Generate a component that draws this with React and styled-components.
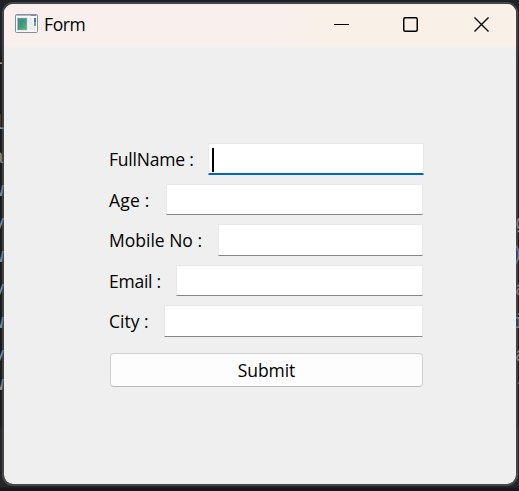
import React from "react";
import styled, { createGlobalStyle } from "styled-components";

const GlobalStyle = createGlobalStyle`
  * { box-sizing: border-box; }
  body { margin: 0; overflow: hidden; }
`;

const Desktop = styled.main`
  position: relative;
  width: 519px;
  height: 491px;
  padding: 2px 1px 5px 2px;
  overflow: hidden;
  background: linear-gradient(#202227 0, #202227 45px, #1b1b1d 60px, #1b1b1d 427px, #242528 429px, #242528 487px, #19161d 488px);
  color: #000;
  font-family: "Open Sans", "Noto Sans", sans-serif;
  font-size: 17.5px;
`;

const CodeGlyph = styled.span`
  position: absolute;
  top: ${(p) => p.$top}px;
  left: ${(p) => p.$left}px;
  color: ${(p) => p.$color};
  font: 20px/24px "Liberation Mono", monospace;
`;

const Window = styled.section`
  position: relative;
  display: flex;
  flex-direction: column;
  width: 516px;
  height: 484px;
  border: 2px solid rgba(106, 106, 107, 0.5);
  border-radius: 11px;
  overflow: hidden;
  background: #efefef;
  background-clip: padding-box;
`;

const TitleBar = styled.header`
  display: flex;
  align-items: flex-start;
  height: 43px;
  flex: none;
  padding-left: 11px;
  background: linear-gradient(90deg, #f9f0ed 0, #f9f0ed 55%, #f9f0e7 65%);
`;

const IconSvg = styled.svg`
  margin-top: 10px;
`;

const Title = styled.h1`
  flex: 1;
  margin: 8px 0 0 6px;
  font-size: 17.5px;
  font-weight: 400;
  line-height: 24px;
  letter-spacing: -0.4px;
`;

const Controls = styled.div`
  display: flex;
`;

const ControlButton = styled.button`
  display: grid;
  place-items: center;
  width: 69px;
  height: 41px;
  padding: 0;
  border: 0;
  background: transparent;

  &:last-child {
    margin-left: 2px;
  }
`;

const Form = styled.form`
  display: flex;
  flex-direction: column;
  width: 315px;
  margin: 96px 0 0 105px;
`;

const Row = styled.div`
  display: flex;
  align-items: flex-start;
  height: ${(p) => p.$height}px;
  margin-bottom: ${(p) => p.$gap}px;
`;

const Label = styled.label`
  width: ${(p) => p.$width}px;
  flex: none;
  padding-top: 4px;
  white-space: pre;
  line-height: 24px;
  letter-spacing: ${(p) => p.$spacing}px;
`;

const Field = styled.div`
  flex: 1;
  display: flex;
  height: 100%;
  margin-right: ${(p) => (p.$focused ? 0 : 1)}px;
  padding: 4px 0 0 3px;
  border: 1px solid #e8e8e8;
  border-bottom: ${(p) => (p.$focused ? "2px solid #0067c0" : "1px solid #868686")};
  border-radius: 1px;
  background: #fff;
`;

const Caret = styled.span`
  width: 2px;
  height: 24px;
  background: #000;
`;

const Submit = styled.button`
  width: 313px;
  height: 34px;
  margin: 6px 0 0 1px;
  padding: 0;
  border: 1px solid #d0d0d0;
  border-bottom-color: #bababa;
  border-radius: 4px;
  background: #fdfdfd;
  color: #000;
  font: inherit;
  line-height: 24px;
  letter-spacing: -0.1px;
`;

const codeGlyphs = [
  { text: "-", top: 52, left: -7, color: "#a0a0a0" },
  { text: "l", top: 112, left: -7, color: "#6f9bb8" },
  { text: "a", top: 146, left: -8, color: "#85888a" },
  { text: "w", top: 179, left: -8, color: "#6d91ae" },
  { text: "v", top: 212, left: -7, color: "#6d91ae" },
  { text: "w", top: 245, left: -8, color: "#6d91ae" },
  { text: "v", top: 278, left: -7, color: "#6d91ae" },
  { text: "w", top: 311, left: -8, color: "#6d91ae" },
  { text: "v", top: 344, left: -7, color: "#6d91ae" },
  { text: "w", top: 373, left: -8, color: "#8a9399" },
  { text: "g", top: 212, left: 515, color: "#888b8d" },
  { text: ")", top: 243, left: 511, color: "#4c86bd" },
  { text: "a", top: 278, left: 515, color: "#888b8d" },
  { text: "i", top: 311, left: 513, color: "#6c91b4" },
  { text: "a", top: 344, left: 515, color: "#888b8d" },
  { text: "-", top: 372, left: 515, color: "#888b8d" },
];

const fields = [
  { label: "FullName :", width: 99, height: 32, gap: 9, spacing: -0.2, focused: true },
  { label: "Age :", width: 57, height: 31, gap: 9, spacing: 0.2 },
  { label: "Mobile No :", width: 109, height: 32, gap: 9, spacing: 0 },
  { label: "Email :", width: 67, height: 31, gap: 9, spacing: -0.25 },
  { label: "City :", width: 55, height: 32, gap: 10, spacing: 0 },
];

function AppIcon() {
  return (
    <IconSvg width="23" height="20" viewBox="0 0 23 20">
      <defs>
        <linearGradient id="screen" x1="0" y1="0" x2="1" y2="1">
          <stop stopColor="#3e83a5" />
          <stop offset=".5" stopColor="#46977f" />
          <stop offset="1" stopColor="#66b66c" />
        </linearGradient>
      </defs>
      <rect x=".5" y=".5" width="22" height="18" rx="1" fill="#f7f8f8" stroke="#898c96" />
      <path d="M1 1.5h21" stroke="#b6bac4" />
      <path d="M16 1.5h5" stroke="#858a99" />
      <rect x="2.5" y="4" width="9.5" height="12" fill="url(#screen)" stroke="#b0bcc1" strokeWidth=".6" />
      <path d="M13.5 4h4v7h-4zM13.5 12h7v4h-7z" fill="#eaecec" />
      <path d="M19 4h2v4h-2z" fill="#4377b1" />
      <path d="M19 8h2v4h-2z" fill="#69ad88" />
    </IconSvg>
  );
}

export default function App() {
  return (
    <>
      <GlobalStyle />
      <Desktop>
        {codeGlyphs.map((g) => (
          <CodeGlyph key={`${g.left}-${g.top}`} $top={g.top} $left={g.left} $color={g.color} aria-hidden="true">
            {g.text}
          </CodeGlyph>
        ))}
        <Window>
          <TitleBar>
            <AppIcon />
            <Title>Form</Title>
            <Controls>
              <ControlButton aria-label="Minimize">
                <svg width="15" height="15"><path d="M0 7.5h15" stroke="#000" /></svg>
              </ControlButton>
              <ControlButton aria-label="Maximize">
                <svg width="15" height="15"><rect x=".75" y=".75" width="13.5" height="13.5" rx="1.5" fill="none" stroke="#000" strokeWidth="1.5" /></svg>
              </ControlButton>
              <ControlButton aria-label="Close">
                <svg width="15" height="15"><path d="M.5.5l14 14M14.5.5l-14 14" stroke="#000" strokeWidth="1.4" /></svg>
              </ControlButton>
            </Controls>
          </TitleBar>
          <Form>
            {fields.map((f) => (
              <Row key={f.label} $height={f.height} $gap={f.gap}>
                <Label $width={f.width} $spacing={f.spacing}>{f.label}</Label>
                <Field $focused={f.focused}>{f.focused && <Caret />}</Field>
              </Row>
            ))}
            <Submit type="button">Submit</Submit>
          </Form>
        </Window>
      </Desktop>
    </>
  );
}
